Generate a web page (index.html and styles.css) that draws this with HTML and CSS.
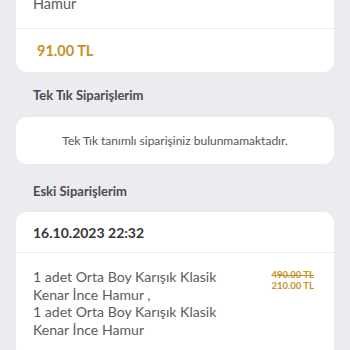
FILE: index.html
```html
<!DOCTYPE html>
<html lang="tr">
<head>
<meta charset="utf-8">
<link rel="stylesheet" href="styles.css">
</head>
<body>
<div class="page">
  <div class="card first">
    <div class="items"><span class="line">Hamur</span></div>
    <div class="price-row"><span class="price">91.00 TL</span></div>
  </div>

  <div class="heading">Tek Tık Siparişlerim</div>
  <div class="card empty">Tek Tık tanımlı siparişiniz bulunmamaktadır.</div>

  <div class="heading second">Eski Siparişlerim</div>
  <div class="card order">
    <div class="date">16.10.2023 22:32</div>
    <div class="order-body">
      <div class="order-text">1 adet Orta Boy Karışık Klasik Kenar İnce Hamur ,<br>1 adet Orta Boy Karışık Klasik Kenar İnce Hamur</div>
      <div class="prices">
        <span class="old">490.00 TL</span>
        <span class="new">210.00 TL</span>
      </div>
    </div>
  </div>
</div>
</body>
</html>
```

FILE: styles.css
```css
html, body {
  margin: 0;
  padding: 0;
  background: #ebebf0;
  height: 350px;
  overflow: hidden;
}
body {
  font-family: Lato, "Open Sans", sans-serif;
  color: #555;
}
.page {
  padding: 0 16px;
}
.card {
  background: #fff;
  border-radius: 11px;
}
.first {
  margin-top: -17px;
  border-top-left-radius: 0;
  border-top-right-radius: 0;
}
.items {
  padding: 12px 17px 0;
  height: 33px;
  border-bottom: 1px solid #eeeef0;
  font-size: 14.5px;
  line-height: 18px;
  color: #5c5c60;
}
.price-row {
  height: 43px;
  display: flex;
  align-items: center;
  padding: 0 21px;
}
.price {
  font-size: 14.5px;
  font-weight: 700;
  color: #c49228;
}
.heading {
  padding: 15px 17px 0;
  height: 30px;
  line-height: 16px;
  font-size: 13px;
  font-weight: 700;
  color: #4a4a4f;
}
.heading.second {
  padding-top: 19px;
  height: 29px;
}
.empty {
  height: 47px;
  display: flex;
  align-items: center;
  justify-content: center;
  font-size: 12px;
  color: #555;
}
.date {
  height: 40px;
  display: flex;
  align-items: center;
  padding: 0 17px;
  border-bottom: 1px solid #eeeef0;
  font-size: 14px;
  font-weight: 700;
  color: #36363a;
}
.order-body {
  display: flex;
  justify-content: space-between;
  padding: 15px 20px 20px 17px;
}
.order-text {
  width: 200px;
  font-size: 14.1px;
  line-height: 17.5px;
  color: #5c5c60;
}
.prices {
  display: flex;
  flex-direction: column;
  align-items: flex-end;
  padding-top: 1px;
  font-size: 9.5px;
  font-weight: 700;
  color: #c49228;
  line-height: 11px;
}
.old {
  text-decoration: line-through;
}
```
